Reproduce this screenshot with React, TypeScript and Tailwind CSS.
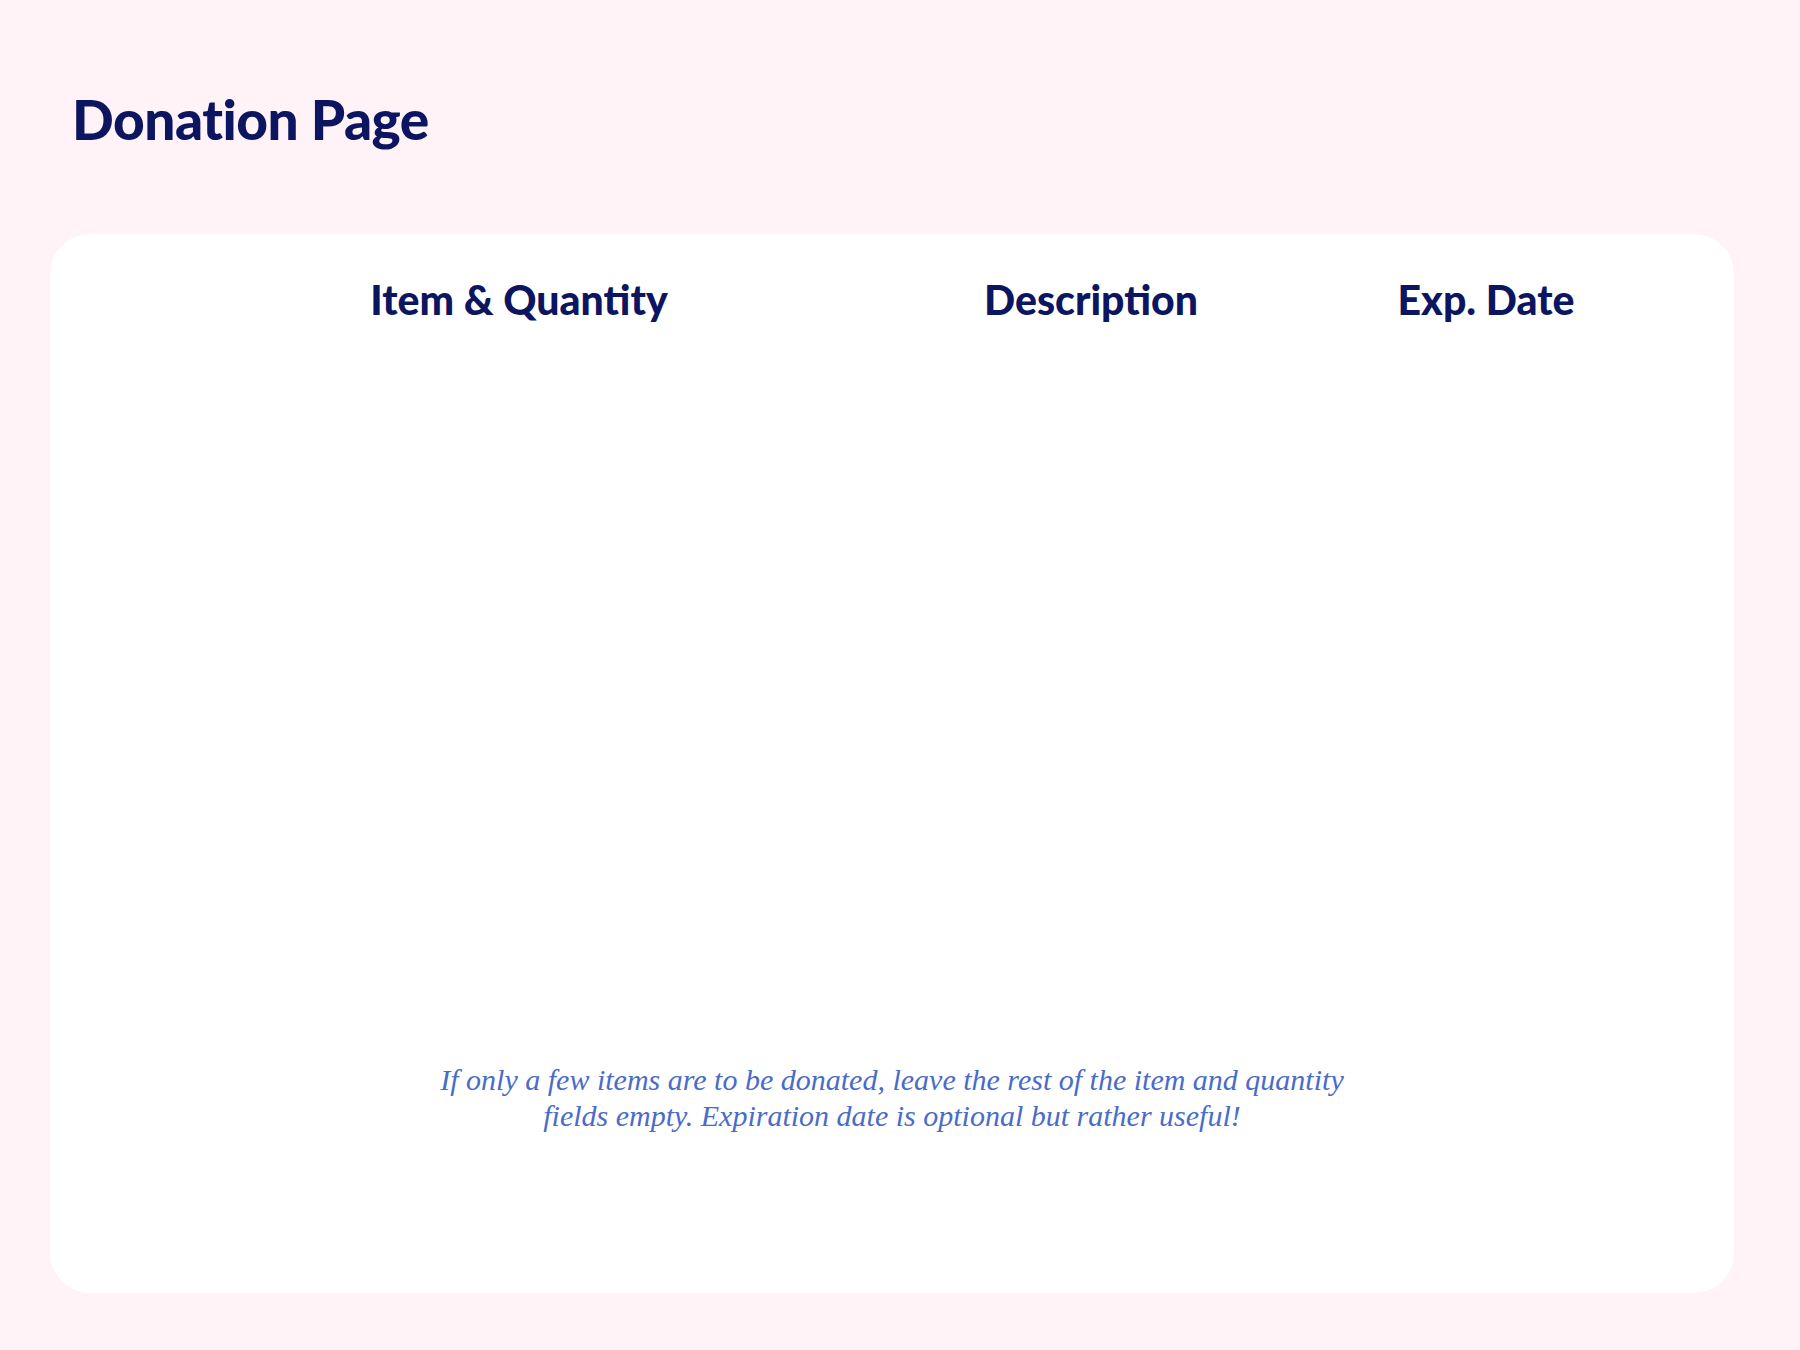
export default function App() {
  return (
    <div className="min-h-[1350px] w-[1800px] bg-[#fff3f7] px-[50px] pt-[87px]" style={{ fontFamily: 'Lato, "Noto Sans", sans-serif' }}>
      <h1 className="pl-[22px] text-[55px] font-black leading-[64px] tracking-[-0.5px] text-[#0c1660]">Donation Page</h1>
      <div className="mt-[83px] flex h-[1059px] w-[1684px] flex-col rounded-[40px] bg-white">
        <div className="flex pt-[42px] text-[41px] font-black leading-[48px] text-[#0c1660]">
          <div className="ml-[169px] w-[600px] text-center">Item &amp; Quantity</div>
          <div className="ml-[72px] w-[400px] text-center">Description</div>
          <div className="ml-[45px] w-[300px] text-center">Exp. Date</div>
        </div>
        <div className="flex-1" />
        <p
          className="mx-auto mb-[159px] w-[930px] text-center text-[30px] italic leading-[36px] text-[#4a6cc8]"
          style={{ fontFamily: '"Liberation Serif", serif' }}
        >
          If only a few items are to be donated, leave the rest of the item and quantity fields empty. Expiration date is optional but rather useful!
        </p>
      </div>
    </div>
  );
}
